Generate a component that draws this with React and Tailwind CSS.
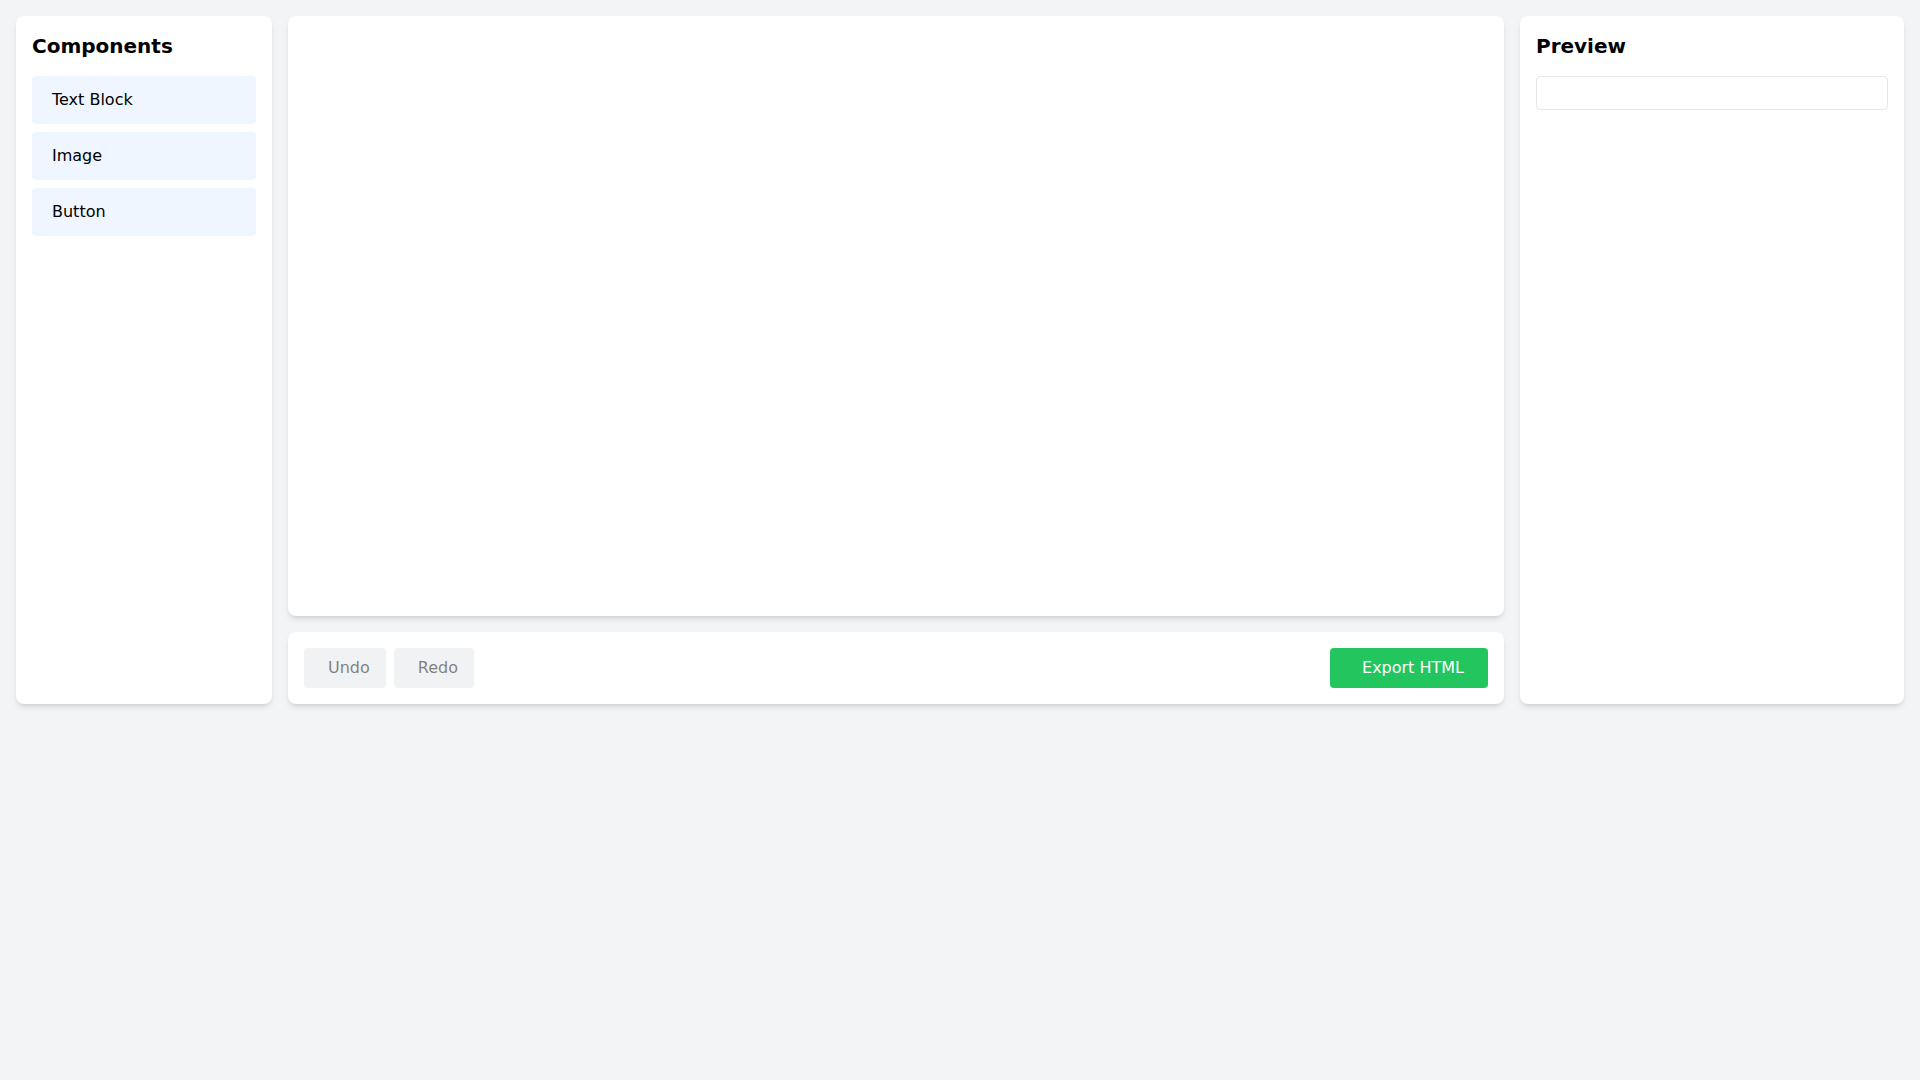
const COMPONENTS = ['Text Block', 'Image', 'Button']

export default function App() {
  return (
    <div className="min-h-screen bg-[#f3f4f6] font-['DejaVu_Sans',sans-serif] text-black">
      <div className="flex gap-4 p-4 h-[720px]">
        {/* component palette */}
        <aside className="w-64 shrink-0 bg-white rounded-lg shadow-md p-4">
          <h2 className="text-xl font-bold mb-4">Components</h2>
          <div className="flex flex-col gap-2">
            {COMPONENTS.map(name => (
              <div key={name} className="bg-[#eff6ff] rounded pl-5 pr-3 py-3 leading-6 cursor-move">
                {name}
              </div>
            ))}
          </div>
        </aside>

        {/* canvas + toolbar */}
        <main className="flex-1 flex flex-col gap-4 min-w-0">
          <div className="flex-1 bg-white rounded-lg shadow-md" />
          <div className="bg-white rounded-lg shadow-md p-4 flex items-center justify-between">
            <div className="flex gap-2">
              <button disabled className="bg-[#e5e7eb] text-black opacity-50 rounded pl-6 pr-4 py-2 leading-6">Undo</button>
              <button disabled className="bg-[#e5e7eb] text-black opacity-50 rounded pl-6 pr-4 py-2 leading-6">Redo</button>
            </div>
            <button className="bg-[#22c55e] text-white rounded pl-8 pr-6 py-2 leading-6">Export HTML</button>
          </div>
        </main>

        {/* preview */}
        <aside className="w-96 shrink-0 bg-white rounded-lg shadow-md p-4">
          <h2 className="text-xl font-bold mb-4">Preview</h2>
          <div className="border border-[#e5e7eb] rounded p-4" />
        </aside>
      </div>
    </div>
  )
}
